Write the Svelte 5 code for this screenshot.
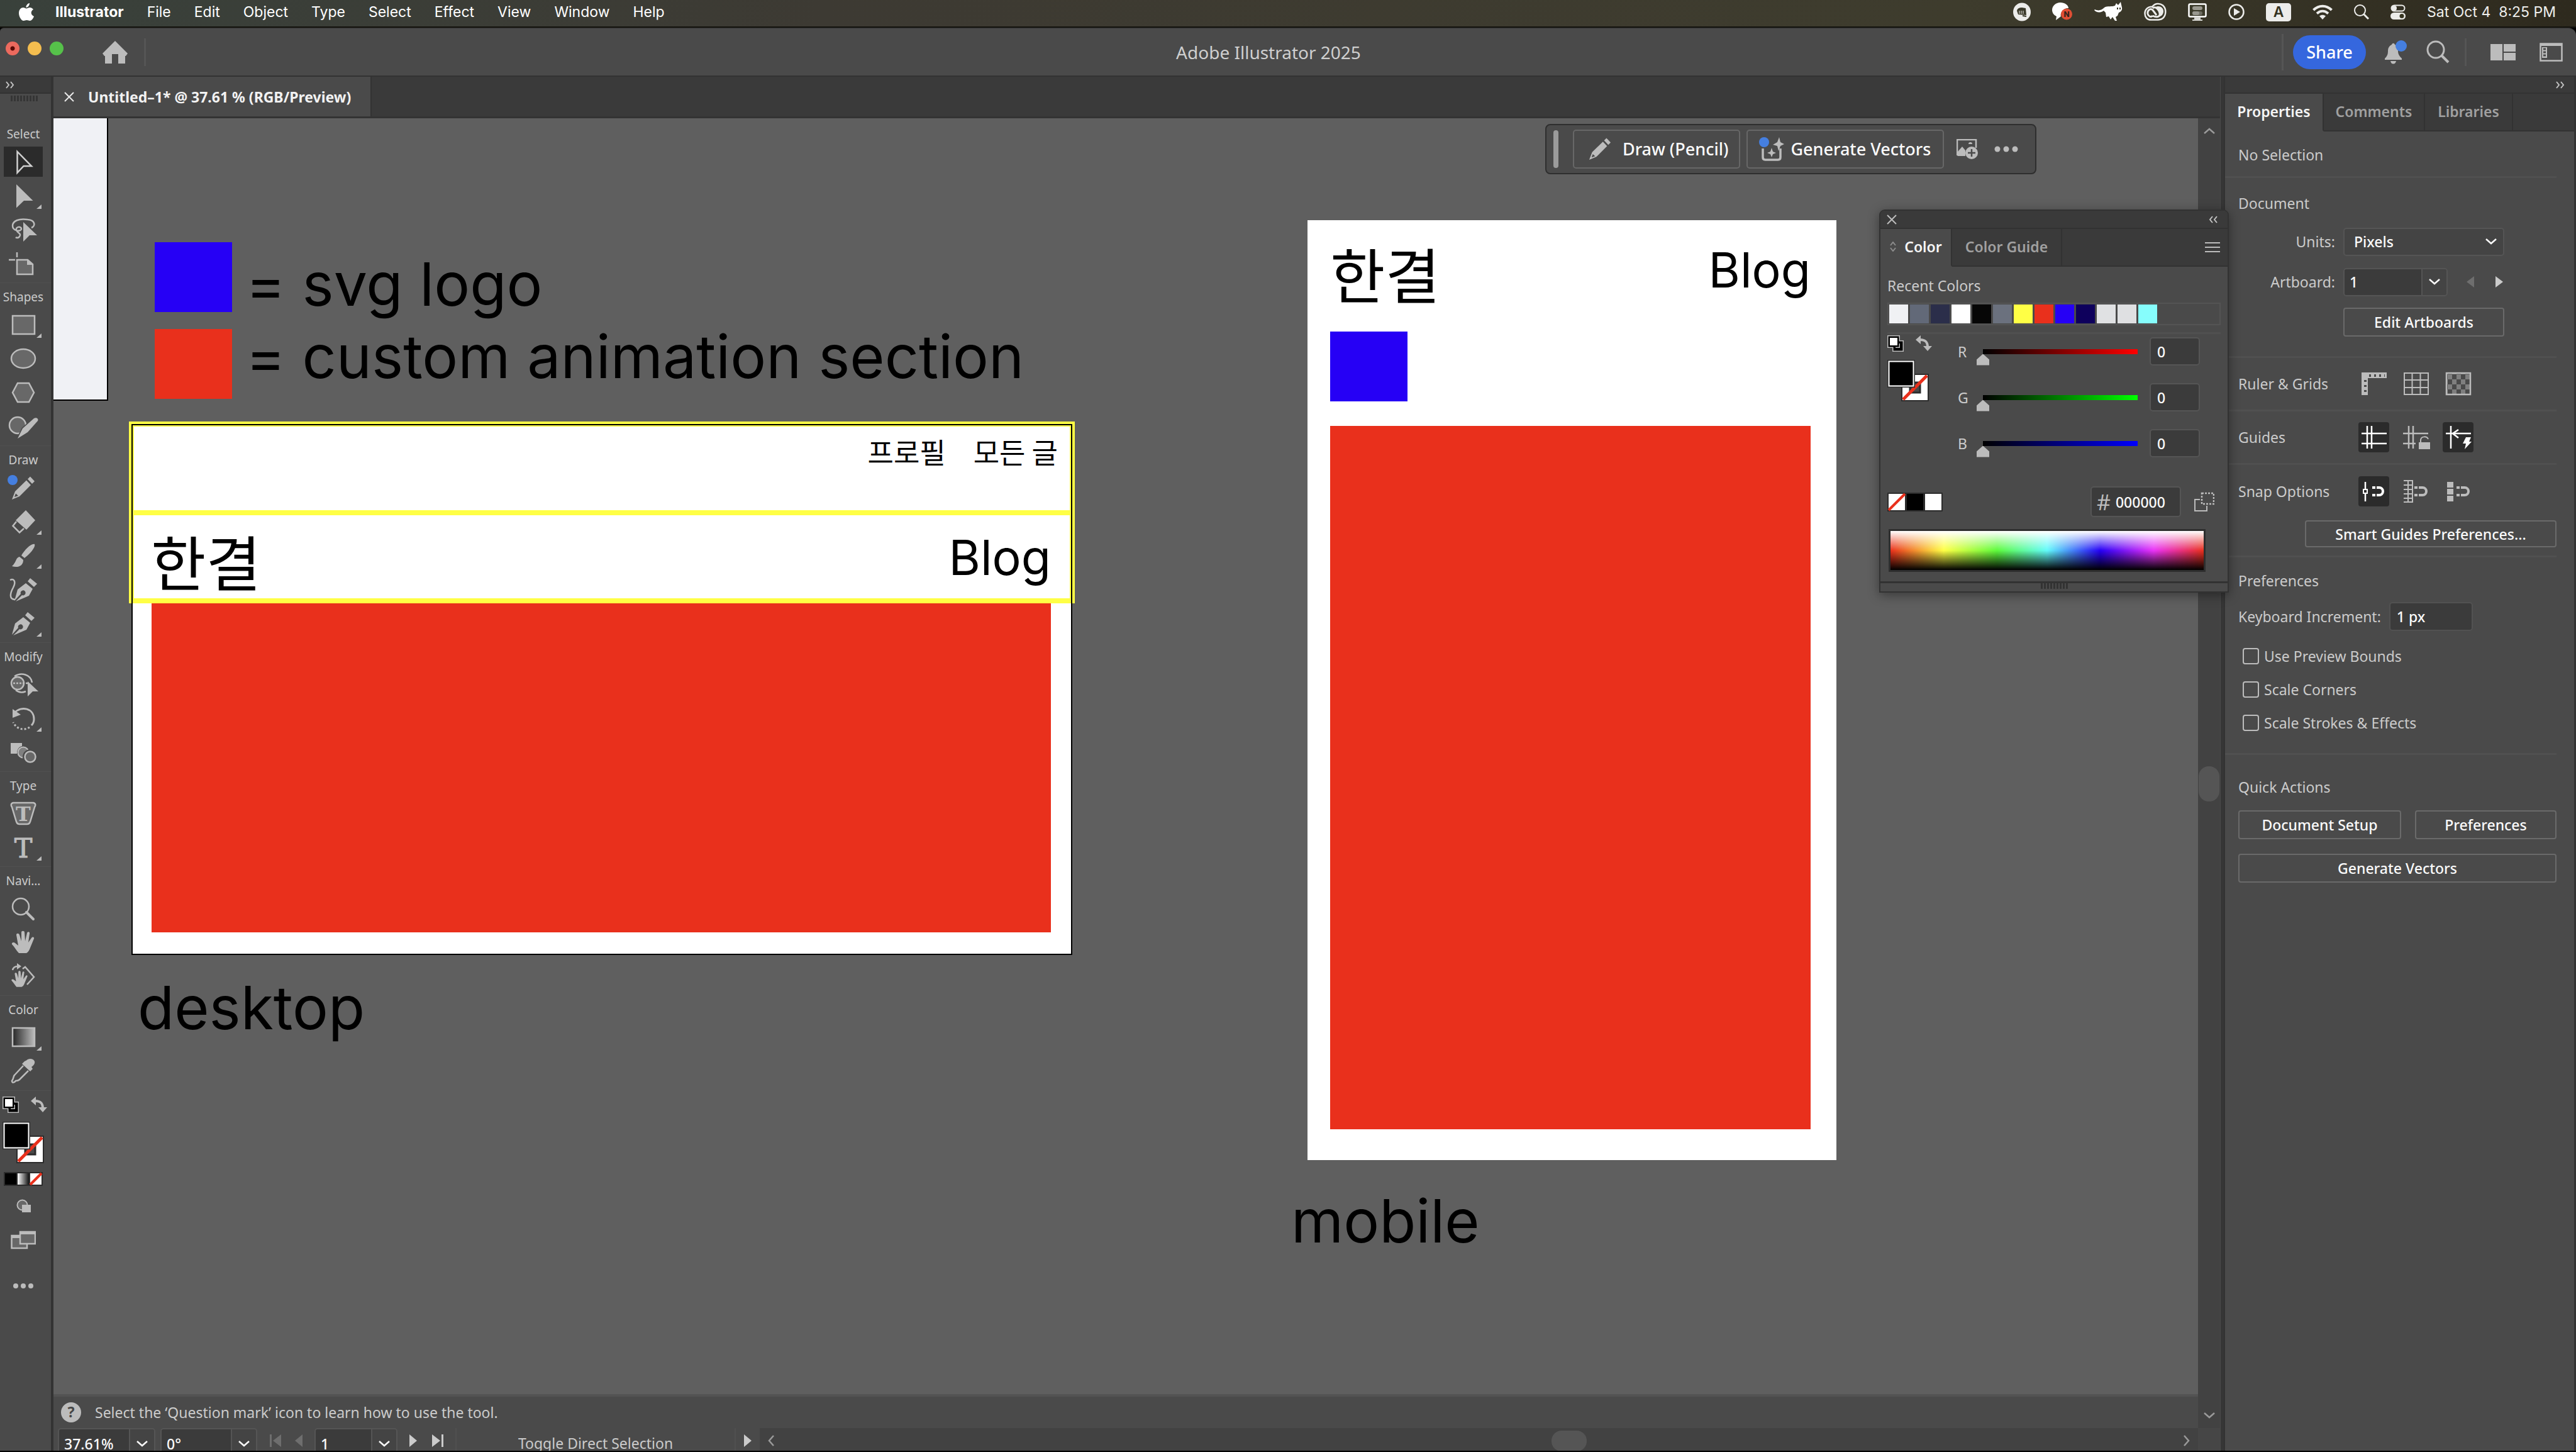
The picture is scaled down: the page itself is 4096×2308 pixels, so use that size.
<script>
  const menus = ['File', 'Edit', 'Object', 'Type', 'Select', 'Effect', 'View', 'Window', 'Help'];

  const G = '#bcbcbc';
  const D = '#686868';
  const corner = `<path d="M60 41V48H52Z" fill="${G}"/>`;
  const nib = `<path fill-rule="evenodd" fill="${G}" d="M13 45L18 27L31 17L42 26L36 37L15 46L25 36A4 4 0 1 0 23 34Z"/><path fill="${G}" d="M34 14L38 9L49 18L44 23Z"/>`;
  const hand = `<path fill="${G}" d="M24 44C20 40 17 34 13 30C12 27 16 26 18 28L23 32L20 15C20 12 24 12 25 15L28 25L28 11C28 8 33 8 33 11L34 25L37 12C38 9 42 10 41 13L39 27L44 20C46 17 49 19 48 21L41 38C39 42 37 44 35 44Z"/>`;
  const paths = {
    select: `<path d="M21.500 11L44 34H31.500L21.500 44.500Z" fill="none" stroke="#d0d0d0" stroke-width="2.500"/>`,
    direct: `<path d="M20 9L46.500 35H32L20 46.500Z" fill="${G}"/>${corner}`,
    lasso: `<g fill="none" stroke="${G}" stroke-width="2.500"><path d="M44 24C51 21 50 12 38 11C24 9 14 13 14 21C14 29 27 31 28 26C28 21 18 22 20 28C21 32 29 33 25 38C23 41 20 40 19 39"/></g><path d="M31 15L53 36H41L31 46Z" fill="${G}"/>`,
    artboard: `<path d="M21 21H38L46 28V44H21Z" fill="${D}" stroke="${G}" stroke-width="2.500"/><path d="M37 20V29H47Z" fill="${G}"/><path d="M21 9V17M8 21H18" stroke="${G}" stroke-width="2.500"/>`,
    rect: `<rect x="14" y="13" width="35" height="29" fill="${D}" stroke="${G}" stroke-width="2.500"/>${corner}`,
    ellipse: `<ellipse cx="31" cy="27" rx="19" ry="15" fill="${D}" stroke="${G}" stroke-width="2.500"/>`,
    polygon: `<path d="M14 27L22 12H40L48 27L40 42H22Z" fill="${D}" stroke="${G}" stroke-width="2.500"/>`,
    shaper: `<circle cx="22" cy="25" r="13" fill="${D}" stroke="${G}" stroke-width="2.500"/><path d="M22 46L30 30L48 14C51 12 56 14 54 18L38 36Z" fill="${G}" stroke="#4a4a4a" stroke-width="3" paint-order="stroke"/>`,
    pencil: `<path fill-rule="evenodd" fill="${G}" d="M13 46L18 33L36 15.500L43 23L25 41ZM19 36.500L17 42L23 40Z"/><path fill="${G}" d="M38 13.500L42 9.500L49 17L45 21Z"/><circle cx="14" cy="15" r="8" fill="#457fe0"/>`,
    eraser: `<path fill="${G}" d="M35 9L50 25L36 40L19 25Z"/><path d="M20 27L14.500 34L25 44.500L32 38" fill="none" stroke="${G}" stroke-width="2.500"/>${corner}`,
    brush: `<path fill="${G}" d="M49 9C44 7 33 18 28 27L33 31C41 25 51 14 49 9ZM25 29C19 30 20 38 13 44C22 47 31 44 31 34Z"/>${corner}`,
    curve: `<path d="M10 12C16 9 20 14 15 24C10 33 8 43 18 43" fill="none" stroke="${G}" stroke-width="2.500"/><g transform="translate(4 0)">${nib}</g>`,
    pen: nib + corner,
    builder: `<g fill="none" stroke="${G}" stroke-width="2.500"><path d="M17 14C28 7 43 11 45 24M19 36C24 40 30 40 35 38"/><circle cx="22" cy="25" r="10" fill="${D}"/><path d="M15 25H38" stroke-dasharray="3 2"/></g><path d="M38 22L55 38H46L38 46Z" fill="${G}"/>`,
    rotate: `<path d="M17 18C28 6 48 11 48 28C48 32 47 35 44 38" fill="none" stroke="${G}" stroke-width="3"/><path d="M14 12V26L27 21Z" fill="${G}"/><path d="M41 41C32 47 20 44 15 33" fill="none" stroke="${G}" stroke-width="3" stroke-dasharray="3 3"/>${corner}`,
    blend: `<path d="M11 12H29V17C24 18 21 22 21 29H11Z" fill="${G}"/><circle cx="31" cy="27" r="8.500" fill="#808080" stroke="${G}" stroke-width="2"/><circle cx="42" cy="34" r="12" fill="#4a4a4a"/><circle cx="42" cy="34" r="8.500" fill="${D}" stroke="${G}" stroke-width="2.500"/>`,
    touch: `<path d="M15 10H47C51 11 51 14 49 17L42 40C41 43 39 44 37 44H25C23 44 21 43 20 40L13 17C11 14 11 11 15 10Z" fill="${D}" stroke="${G}" stroke-width="2.500"/><text x="31" y="39" text-anchor="middle" font-family="DejaVu Serif, serif" font-weight="bold" font-size="32" fill="${G}">T</text>`,
    type: `<text x="31" y="43" text-anchor="middle" font-family="DejaVu Serif, serif" font-size="43" fill="${G}" stroke="${G}">T</text>${corner}`,
    zoom: `<circle cx="27" cy="24" r="13" fill="none" stroke="${G}" stroke-width="2.500"/><path d="M36 33L47 44" stroke="${G}" stroke-width="4" stroke-linecap="round"/>`,
    hand,
    rotview: `<g transform="translate(3 12) scale(.72)">${hand}</g><path d="M14 17C15 13 18 11 22 11" fill="none" stroke="${G}" stroke-width="2.500"/><path d="M21 6L28 11L21 16Z" fill="${G}"/><path d="M30 15L34 12L48 28L37 40" fill="none" stroke="${G}" stroke-width="2.500"/>`,
    gradient: `<defs><linearGradient id="tg"><stop offset="0" stop-color="#262626"/><stop offset="1" stop-color="#bdbdbd"/></linearGradient></defs><rect x="14" y="12" width="35" height="29" fill="url(#tg)" stroke="${G}" stroke-width="2.500"/>${corner}`,
    dropper: `<path d="M36 9.500C39 6 47 6 49 11C50 15 47 18 44 20L46 23L42 27L29 15L33 11Z" fill="${G}"/><path d="M31 18L17 33C15 35 16 38 13 42C13 46 17 45 19 42C22 42 23 42 25 40L39 26" fill="none" stroke="${G}" stroke-width="2.500"/>`
  };

  const sections = [
    { name: 'Select', tools: [['select', 'Selection'], ['direct', 'Direct Selection'], ['lasso', 'Lasso'], ['artboard', 'Artboard']] },
    { name: 'Shapes', tools: [['rect', 'Rectangle'], ['ellipse', 'Ellipse'], ['polygon', 'Polygon'], ['shaper', 'Shaper']] },
    { name: 'Draw', tools: [['pencil', 'Pencil'], ['eraser', 'Eraser'], ['brush', 'Paintbrush'], ['curve', 'Curvature'], ['pen', 'Pen']] },
    { name: 'Modify', tools: [['builder', 'Shape Builder'], ['rotate', 'Rotate'], ['blend', 'Blend']] },
    { name: 'Type', tools: [['touch', 'Touch Type'], ['type', 'Type']] },
    { name: 'Navi...', tools: [['zoom', 'Zoom'], ['hand', 'Hand'], ['rotview', 'Rotate View']] },
    { name: 'Color', tools: [['gradient', 'Gradient'], ['dropper', 'Eyedropper']] }
  ];
  let active = $state('select');

  const recent = ['#f0f1f4', '#626978', '#2b2e4a', '#ffffff', '#060606', '#6b717e', '#ffff45', '#e9301c', '#2600f5', '#0e005c', '#e0e1e3', '#dfe0e2', '#86fdfc'];
  let channels = $state([
    { name: 'R', value: 0 },
    { name: 'G', value: 0 },
    { name: 'B', value: 0 }
  ]);
  const prefs = ['Use Preview Bounds', 'Scale Corners', 'Scale Strokes & Effects'];
</script>

{#snippet chev()}
  <svg class="chev" viewBox="0 0 20 12" aria-hidden="true"><path d="M2 2L10 9L18 2" fill="none" stroke="currentColor" stroke-width="2.500" /></svg>
{/snippet}

{#snippet expand()}
  <svg width="14" height="12" viewBox="0 0 14 12" aria-hidden="true"><path d="M1 1L5 6L1 11M8 1L12 6L8 11" fill="none" stroke="#c2c2c2" stroke-width="2" /></svg>
{/snippet}

{#snippet swapRow()}
  <svg width="26" height="26" viewBox="0 0 26 26" aria-hidden="true">
    <rect x="8" y="8" width="18" height="18" fill={G} /><rect width="20" height="20" fill={G} />
    <rect x="9.500" y="9.500" width="15" height="15" fill="#000" /><rect x="13" y="13" width="7" height="7" fill={G} /><rect x="1.500" y="1.500" width="17" height="17" fill="#000" />
    <rect x="4" y="4" width="12" height="12" fill="#fff" />
  </svg>
  <svg width="26" height="26" viewBox="0 0 26 26" aria-hidden="true">
    <path d="M7 7C15 7 19 10 19 19" fill="none" stroke={G} stroke-width="4" /><path d="M0 7L8 0V14ZM12 17H26L19 25Z" fill={G} />
  </svg>
{/snippet}

{#snippet fillStroke()}
  <svg width="66" height="66" viewBox="0 0 66 66" aria-hidden="true">
    <rect x="23" y="23" width="42" height="42" fill="#fff" stroke="#2c2c2c" stroke-width="2" />
    <rect x="36" y="36" width="16" height="16" fill="#4a4a4a" stroke="#2c2c2c" stroke-width="3" />
    <path d="M25 63L63 25" stroke="#e9301c" stroke-width="5" />
    <rect width="44" height="44" fill="#2c2c2c" /><rect x="1.500" y="1.500" width="41" height="41" fill="#fff" /><rect x="3.500" y="3.500" width="37" height="37" fill="#000" />
  </svg>
{/snippet}

<div class="screen">
  <nav class="menubar" aria-label="Menu bar">
    <svg width="24" height="28" viewBox="0 0 24 28" aria-label="Apple"><path fill="#fff" d="M17 0C17 4 14 7 11.500 7C11 3.500 14 .5 17 0ZM12 8.500C13.500 8.500 15 7 17.500 7C20 7 22 8.500 23 10C18 13 19 19 24 21C22.500 25 20 28 17.500 28C15.500 28 15 27 12.500 27C10 27 9.500 28 7.500 28C4 28 0 21.500 0 16C0 10 3.500 7 7 7C9 7 10.500 8.500 12 8.500Z" /></svg>
    <button class="mi strong">Illustrator</button>
    {#each menus as m}<button class="mi">{m}</button>{/each}
    <div class="tray">
      <svg width="28" height="30" viewBox="0 0 28 30"><ellipse cx="14" cy="15" rx="14" ry="14.500" fill="#ececea" /><path d="M6 13Q7 8 14 8L20 9L21 20L8 19Z" fill="#3a3929" /><path d="M10 13V18M13 13V18M16 13V18" stroke="#ececea" /><path d="M15 21L21 22" stroke="#3a3929" stroke-width="2" /></svg>
      <svg width="32" height="30" viewBox="0 0 32 30"><path d="M13 0C20 0 26 4 26 9C19 8 12 16 14 22L6 28L7 22C2 20 0 15 0 12C0 5 6 0 13 0Z" fill="#fff" /><circle cx="23" cy="18.500" r="9" fill="#e04e34" /><text x="23" y="23" text-anchor="middle" font-family="Inter" font-weight="800" font-size="12" fill="#33241c">N</text></svg>
      <svg width="46" height="32" viewBox="0 0 46 32"><path d="M2 12C8 15 13 13 17 9C21 6 30 8 34 6L36 2L39 5L43 0L45 9C46 13 43 16 40 17L38 22L35 24L37 30H34L30 24L27 28L24 23L20 24L19 17L16 14C10 18 4 17 1 13Z" fill="#fff" /><path d="M38 9V12M42 9V12" stroke="#3a3929" stroke-width="2" /></svg>
      <svg width="36" height="30" viewBox="0 0 36 30"><g fill="none" stroke="#ececea"><path d="M11 27.500C5 27.500 1.500 23 1.500 17.500C1.500 10 8 6 13 7C17 1 25 .5 30 4.500C36 10 35.500 20 30 25C27 27.500 24 27.500 11 27.500Z" stroke-width="2.500" /><path d="M20 20L14 12C10 8 5 13 6 18C7 22 11 24 14 21M14 9C19 5 26 13 25 20C24 23 19 24 14 21" stroke-width="3" /></g><path d="M17 8C24 3 32 8 31 15C30 21 26 23 22 22C27 18 23 10 17 8Z" fill="#ececea" /></svg>
      <svg width="30" height="30" viewBox="0 0 30 30"><rect x="1.500" y="2.500" width="27" height="20" rx="2" fill="#3a3929" stroke="#fff" stroke-width="2.500" /><rect x="7" y="6" width="16" height="6" rx="3" fill="#99988f" /><rect x="7" y="14" width="16" height="6" rx="3" fill="#6e6d62" /><rect x="7" y="14" width="11" height="6" rx="3" fill="#99988f" /><path d="M10 24H20V27H23V29H7V27H10Z" fill="#d5d5d0" /></svg>
      <svg width="26" height="26" viewBox="0 0 26 26"><circle cx="13" cy="13" r="11.500" fill="none" stroke="#ececea" stroke-width="2.500" /><path d="M9 7L19 13L9 19Z" fill="#ececea" /></svg>
      <span class="ime">A</span>
      <svg width="32" height="24" viewBox="0 0 32 24"><g fill="none" stroke="#ececea" stroke-width="4"><path d="M1.500 9C10 .5 22 .5 30.500 9" /><path d="M7 14.500C12.500 9.500 19.500 9.500 25 14.500" /></g><path d="M11 18.500C14 16 18 16 21 18.500L16 24Z" fill="#ececea" /></svg>
      <svg width="24" height="24" viewBox="0 0 24 24"><circle cx="9.500" cy="9.500" r="8.500" fill="none" stroke="#ececea" stroke-width="2" /><path d="M15.500 15.500L23 23" stroke="#ececea" stroke-width="3" /></svg>
      <svg width="24" height="24" viewBox="0 0 24 24"><rect x="1.500" y="1.500" width="21" height="9" rx="4.500" fill="none" stroke="#ececea" stroke-width="2" /><circle cx="6" cy="6" r="4" fill="#ececea" /><rect y="13" width="24" height="11" rx="5.500" fill="#ececea" /><circle cx="18" cy="18.500" r="3.500" fill="#35331f" /></svg>
      <span class="clock">Sat Oct 4 &nbsp;8:25 PM</span>
    </div>
  </nav>

  <div class="window">
    <header class="appbar">
      <div class="left">
        <span class="lights"><i class="r"></i><i class="y"></i><i class="g"></i></span>
        <button class="bare" aria-label="Home"><svg width="40" height="36" viewBox="0 0 40 36"><path fill={G} d="M20 0L40 20L37 24H36V36H25V21H15V36H4V24H3L0 20Z" /></svg></button>
        <span class="vline"></span>
      </div>
      <h1>Adobe Illustrator 2025</h1>
      <div class="right">
        <span class="vline tall"></span>
        <button class="share">Share</button>
        <button class="bare" aria-label="Notifications"><svg width="36" height="38" viewBox="0 0 36 38"><path fill={G} d="M11 7C12 4 15 4 16 7C20 9 21 12 21 17C21 22 23 25 27 29V31H0V29C4 25 5 22 5 17C5 12 7 9 11 7ZM9 33H18C17 37 15 37.500 13.500 37.500C12 37.500 10 37 9 33Z" /><circle cx="26" cy="9" r="9" fill="#457fe0" /></svg></button>
        <button class="bare" aria-label="Search"><svg width="37" height="37" viewBox="0 0 37 37"><circle cx="15" cy="15" r="13" fill="none" stroke={G} stroke-width="3" /><path d="M24 24L35 35" stroke={G} stroke-width="4" /></svg></button>
        <span class="vline"></span>
        <button class="bare wide" aria-label="Arrange documents"><svg width="40" height="26" viewBox="0 0 40 26"><path fill={G} d="M0 0H19V26H0ZM21 0H40V12H21ZM21 14H40V26H21Z" /></svg></button>
        <button class="bare" aria-label="Workspace"><svg width="37" height="30" viewBox="0 0 37 30"><path d="M1.500 1.500H35.500V28.500H1.500Z" fill="none" stroke={G} stroke-width="2.500" /><path d="M1 1H36V5H1ZM4 7H12V24H4Z" fill={G} /><path d="M6 10H10M6 15H10M6 20H10" stroke="#4a4a4a" stroke-width="3" /></svg></button>
      </div>
    </header>

    <div class="work">
      <aside class="toolbar" aria-label="Tools">
        <div class="strip">{@render expand()}</div>
        <div class="grip"></div>
        {#each sections as s}
          <section>
            <h2>{s.name}</h2>
            {#each s.tools as [id, label]}
              <button class="tool" class:on={active === id} aria-label={label} onclick={() => (active = id)}>
                <svg width="62" height="54" viewBox="0 0 62 54">{@html paths[id]}</svg>
              </button>
            {/each}
          </section>
        {/each}
        <section class="inks">
          <div class="swap">{@render swapRow()}</div>
          <div class="fs">{@render fillStroke()}</div>
          <svg width="62" height="22" viewBox="0 0 62 22" aria-hidden="true">
            <defs><linearGradient id="mg"><stop offset="0" stop-color="#fff" /><stop offset="1" stop-color="#111" /></linearGradient></defs>
            <rect width="62" height="22" fill="#2c2c2c" /><rect x="2" y="2" width="18" height="18" /><rect x="22" y="2" width="18" height="18" fill="url(#mg)" /><rect x="42" y="2" width="18" height="18" fill="#fff" /><path d="M42 20L60 2" stroke="#e9301c" stroke-width="4" />
          </svg>
          <button class="bare m1" aria-label="Drawing mode"><svg width="24" height="22" viewBox="0 0 24 22"><circle cx="9.500" cy="9.500" r="8" fill={D} stroke={G} stroke-width="2" /><rect x="9" y="9" width="14" height="12" fill={G} /></svg></button>
          <button class="bare m2" aria-label="Screen mode"><svg width="40" height="30" viewBox="0 0 40 30"><path d="M1.500 8H26V28H1.500Z" fill={D} stroke={G} stroke-width="2.500" /><path d="M1 7H26V12H1Z" fill={G} /><path d="M15 2H39V21H15Z" fill={D} stroke={G} stroke-width="2.500" /><path d="M14 1H40V6H14Z" fill={G} /></svg></button>
          <button class="bare m3" aria-label="Edit toolbar"><svg width="32" height="8" viewBox="0 0 32 8"><circle cx="4" cy="4" r="4" fill={G} /><circle cx="16" cy="4" r="4" fill={G} /><circle cx="28" cy="4" r="4" fill={G} /></svg></button>
        </section>
      </aside>

      <main>
        <div class="tabs">
          <div class="doctab">
            <button class="bare" aria-label="Close document"><svg width="16" height="16" viewBox="0 0 16 16"><path d="M1 1L15 15M15 1L1 15" stroke="#e8e8e8" stroke-width="2" /></svg></button>
            <span>Untitled–1* @ 37.61 % (RGB/Preview)</span>
          </div>
        </div>
        <div class="stage">
          <div class="canvas">
            <div class="page"></div>
            <div class="chip blue key1"></div>
            <p class="note n1">= svg logo</p>
            <div class="chip red key2"></div>
            <p class="note n2">= custom animation section</p>

            <article class="board desktop">
              <div class="frame navrow"><span>프로필</span><span>모든 글</span></div>
              <div class="frame herorow"><b>한결</b><em>Blog</em></div>
              <div class="red fillbox"></div>
            </article>
            <p class="note n3">desktop</p>

            <article class="board mobile">
              <div class="herorow"><b>한결</b><em>Blog</em></div>
              <div class="chip blue"></div>
              <div class="red fillbox"></div>
            </article>
            <p class="note n4">mobile</p>

            <div class="taskbar">
              <span class="handle"></span>
              <button class="box"><svg width="36" height="36" viewBox="12 9 38 38"><path fill-rule="evenodd" fill={G} d="M13 46L18 33L36 15.500L43 23L25 41ZM19 36.500L17 42L23 40Z" /><path fill={G} d="M38 13.500L42 9.500L49 17L45 21Z" /></svg>Draw (Pencil)</button>
              <button class="box gen"><svg width="40" height="38" viewBox="0 0 40 38"><path d="M6 18V32Q6 36 10 36H30Q34 36 34 32V18" fill="none" stroke={G} stroke-width="3.500" /><path fill={G} d="M32 0L34 8L40 11L34 14L31 22L29 14L22 12L29 8ZM20 17L22 23L27 25L22 27L20 32L18 27L13 25L18 23Z" /><circle cx="8" cy="8" r="8" fill="#457fe0" /></svg>Generate Vectors</button>
              <button class="bare" aria-label="Add image"><svg width="34" height="32" viewBox="0 0 34 32"><path d="M1 26V1H31V14" fill="none" stroke={G} stroke-width="2.500" /><path d="M2 26V20L9 12L14 18V27H1ZM19 8A3 3 0 1 1 25 8Z" fill={G} /><circle cx="24" cy="22" r="10" fill={G} /><path d="M24 16V28M18 22H30" stroke="#4a4a4a" stroke-width="2.500" /></svg></button>
              <button class="bare" aria-label="More options"><svg width="38" height="10" viewBox="0 0 38 10"><circle cx="5" cy="5" r="4.500" fill={G} /><circle cx="19" cy="5" r="4.500" fill={G} /><circle cx="33" cy="5" r="4.500" fill={G} /></svg></button>
            </div>
          </div>
          <div class="vscroll">
            <button class="bare up" aria-label="Scroll up">{@render chev()}</button>
            <span class="vthumb"></span>
            <button class="bare" aria-label="Scroll down">{@render chev()}</button>
          </div>
          <div class="hint">
            <svg width="32" height="32" viewBox="0 0 32 32" aria-hidden="true"><circle cx="16" cy="16" r="16" fill={G} /><text x="16" y="24" text-anchor="middle" font-family="Noto Sans" font-weight="bold" font-size="23" fill="#454545">?</text></svg>
            <span>Select the ‘Question mark’ icon to learn how to use the tool.</span>
          </div>
        </div>
        <footer class="status">
          <div class="combo zoomf"><input aria-label="Zoom level" value="37.61%" /><button aria-label="Zoom presets">{@render chev()}</button></div>
          <div class="combo rotf"><input aria-label="Canvas rotation" value="0°" /><button aria-label="Rotation presets">{@render chev()}</button></div>
          <span class="pair">
            <button class="bare dim" aria-label="First artboard"><svg width="20" height="20" viewBox="0 0 20 20"><path d="M1 0H4V20H1ZM19 0V20L6 10Z" fill="currentColor" /></svg></button>
            <button class="bare dim" aria-label="Previous artboard"><svg width="14" height="20" viewBox="0 0 14 20"><path d="M13 0V20L1 10Z" fill="currentColor" /></svg></button>
          </span>
          <div class="combo artf"><input aria-label="Artboard number" value="1" /><button aria-label="Artboard list">{@render chev()}</button></div>
          <span class="pair">
            <button class="bare" aria-label="Next artboard"><svg width="14" height="20" viewBox="0 0 14 20"><path d="M1 0V20L13 10Z" fill="currentColor" /></svg></button>
            <button class="bare" aria-label="Last artboard"><svg width="20" height="20" viewBox="0 0 20 20"><path d="M16 0H19V20H16ZM1 0V20L14 10Z" fill="currentColor" /></svg></button>
          </span>
          <div class="mode">Toggle Direct Selection</div>
          <button class="bare play" aria-label="Status options"><svg width="14" height="20" viewBox="0 0 14 20"><path d="M1 0V20L13 10Z" fill="currentColor" /></svg></button>
          <div class="hscroll">
            <button class="bare lt" aria-label="Scroll left">{@render chev()}</button>
            <span class="hthumb"></span>
            <button class="bare rt" aria-label="Scroll right">{@render chev()}</button>
          </div>
          <div class="cornerbox"></div>
        </footer>
      </main>

      <aside class="props">
        <div class="strip end">{@render expand()}</div>
        <div class="ptabs" role="tablist">
          <button role="tab" class="on" aria-selected="true">Properties</button>
          <button role="tab" aria-selected="false">Comments</button>
          <button role="tab" aria-selected="false">Libraries</button>
        </div>
        <section class="none"><h3>No Selection</h3></section>
        <section class="docsec">
          <h3>Document</h3>
          <div class="frow"><label for="units">Units:</label>
            <div class="selwrap"><select id="units"><option>Pixels</option></select>{@render chev()}</div>
          </div>
          <div class="frow"><label for="ab">Artboard:</label>
            <div class="combo abf"><input id="ab" value="1" /><button aria-label="Choose artboard">{@render chev()}</button></div>
            <button class="bare dim nav1" aria-label="Previous"><svg width="14" height="18" viewBox="0 0 14 18"><path d="M13 0V18L1 9Z" fill="currentColor" /></svg></button>
            <button class="bare nav2" aria-label="Next"><svg width="14" height="18" viewBox="0 0 14 18"><path d="M1 0V18L13 9Z" fill="currentColor" /></svg></button>
          </div>
          <div class="frow"><span></span><button class="btn edit">Edit Artboards</button></div>
        </section>
        <section class="irow">
          <h3>Ruler &amp; Grids</h3>
          <button class="ib" aria-label="Show rulers"><svg width="42" height="38" viewBox="0 0 42 38"><path d="M1 1H41V10H11V37H1Z" fill={G} /><path d="M13 6H38" stroke="#4a4a4a" stroke-width="4" stroke-dasharray="3 5" /><path d="M7 13V35" stroke="#4a4a4a" stroke-width="4" stroke-dasharray="3 5" /></svg></button>
          <button class="ib" aria-label="Show grid"><svg width="42" height="38" viewBox="0 0 42 38"><path d="M2 2H40V36H2ZM14.500 2V36M27.500 2V36M2 13H40M2 25H40" fill="none" stroke={G} stroke-width="2" /></svg></button>
          <button class="ib" aria-label="Show transparency grid"><svg width="42" height="38" viewBox="0 0 42 38"><defs><pattern id="ck" x="4" y="4" width="14" height="16" patternUnits="userSpaceOnUse"><path d="M0 0H7V8H0ZM7 8H14V16H7Z" fill="#7f7f7f" /></pattern></defs><rect x="2" y="2" width="38" height="34" fill="url(#ck)" stroke={G} stroke-width="2.500" /></svg></button>
        </section>
        <section class="irow">
          <h3>Guides</h3>
          <button class="ib on" aria-label="Show guides"><svg width="42" height="38" viewBox="0 0 42 38"><path d="M10 1V37M17 1V37M1 13H41M1 29H41" stroke="#fff" stroke-width="2.500" /></svg></button>
          <button class="ib" aria-label="Lock guides"><svg width="44" height="38" viewBox="0 0 44 38"><path d="M10 1V37M17 1V37M1 13H41M1 29H21" stroke={G} stroke-width="2.500" /><rect x="26" y="27" width="18" height="11" fill={G} /><path d="M29 27V23C30 17 39 17 41 22" fill="none" stroke={G} stroke-width="2" /></svg></button>
          <button class="ib on" aria-label="Smart guides"><svg width="42" height="38" viewBox="0 0 42 38"><path d="M9 1V37M1 13H41M21 7L12 13L21 20" fill="none" stroke="#fff" stroke-width="2.500" /><path d="M33 19H41L38 26H42L31 38L33 29H28Z" fill="#fff" /></svg></button>
        </section>
        <section class="snap">
          <div class="irow">
            <h3>Snap Options</h3>
            <button class="ib on" aria-label="Snap to point"><svg width="42" height="38" viewBox="0 0 42 38"><path d="M7 4V35" stroke="#fff" stroke-width="2.500" /><rect x="4" y="16" width="6" height="6" fill="#2b2b2b" stroke="#fff" stroke-width="2" /><path d="M25 13H29A6 6 0 0 1 29 25H25" fill="none" stroke="#fff" stroke-width="4" /><path d="M18 13H23M18 25H23" stroke="#fff" stroke-width="4" /></svg></button>
            <button class="ib" aria-label="Snap to grid"><svg width="42" height="38" viewBox="0 0 42 38"><path d="M1 2H15V36H1M8 2V36M1 9H15M1 16H15M1 23H15M1 30H15" fill="none" stroke={G} stroke-width="2" /><path d="M25 13H31A6 6 0 0 1 31 25H25" fill="none" stroke={G} stroke-width="4" /><path d="M18 13H23M18 25H23" stroke={G} stroke-width="4" /></svg></button>
            <button class="ib" aria-label="Snap to pixel"><svg width="42" height="38" viewBox="0 0 42 38"><path d="M3 4H13V13H3ZM3 15H13V24H3ZM3 26H13V35H3Z" fill={G} /><path d="M25 13H31A6 6 0 0 1 31 25H25" fill="none" stroke={G} stroke-width="4" /><path d="M18 13H23M18 25H23" stroke={G} stroke-width="4" /></svg></button>
          </div>
          <button class="btn smart">Smart Guides Preferences...</button>
        </section>
        <section class="prefs">
          <h3>Preferences</h3>
          <div class="kb"><label for="ki">Keyboard Increment:</label><input id="ki" value="1 px" /></div>
          {#each prefs as p}<label class="check"><input type="checkbox" />{p}</label>{/each}
        </section>
        <section class="quick">
          <h3>Quick Actions</h3>
          <div class="qgrid">
            <button class="btn">Document Setup</button>
            <button class="btn">Preferences</button>
            <button class="btn span">Generate Vectors</button>
          </div>
        </section>
      </aside>
    </div>

    <div class="colorpanel" role="dialog" aria-label="Color">
      <div class="cphead">
        <button class="bare" aria-label="Close panel"><svg width="16" height="16" viewBox="0 0 16 16"><path d="M1 1L15 15M15 1L1 15" stroke={G} stroke-width="2" /></svg></button>
        <svg width="14" height="12" viewBox="0 0 14 12" aria-hidden="true"><path d="M6 1L2 6L6 11M13 1L9 6L13 11" fill="none" stroke="#c2c2c2" stroke-width="2" /></svg>
      </div>
      <div class="cptabs" role="tablist">
        <button role="tab" class="on" aria-selected="true"><svg width="12" height="16" viewBox="0 0 12 16"><path d="M2 6L6 1L10 6M2 10L6 15L10 10" fill="none" stroke="#8c8c8c" stroke-width="2" /></svg>Color</button>
        <button role="tab" aria-selected="false">Color Guide</button>
        <button class="bare burger" aria-label="Panel menu"><svg width="24" height="18" viewBox="0 0 24 18"><path d="M0 2H24M0 9H24M0 16H24" stroke={G} stroke-width="2" /></svg></button>
      </div>
      <div class="cpbody">
        <h3>Recent Colors</h3>
        <div class="swatches">
          {#each recent as c}<button style:background={c} aria-label={c}></button>{/each}
        </div>
        <div class="mixer">
          <div class="inkcol">
            <div class="swap">{@render swapRow()}</div>
            {@render fillStroke()}
          </div>
          <div class="sliders">
            {#each channels as ch}
              <label for={'r' + ch.name}>{ch.name}</label>
              <input id={'r' + ch.name} class={'range ' + ch.name} type="range" min="0" max="255" bind:value={ch.value} />
              <input class="num" aria-label={ch.name + ' value'} bind:value={ch.value} />
            {/each}
          </div>
        </div>
        <div class="hexrow">
          <svg width="88" height="30" viewBox="0 0 88 30" aria-hidden="true"><rect width="88" height="30" fill="#2c2c2c" /><rect x="2" y="2" width="26" height="26" fill="#fff" /><path d="M2 28L28 2" stroke="#e9301c" stroke-width="4" /><rect x="31" y="2" width="26" height="26" fill="#000" /><rect x="60" y="2" width="26" height="26" fill="#fff" /></svg>
          <label class="hex"><span>#</span><input value="000000" aria-label="Hex value" /></label>
          <svg width="32" height="32" viewBox="0 0 32 32" aria-hidden="true"><path d="M9 12H1V30H20V22" fill="none" stroke={G} stroke-width="2" /><path d="M12 2H31V19H12Z" fill="none" stroke={G} stroke-width="2.500" stroke-dasharray="3 2" /></svg>
        </div>
        <div class="spectrum"></div>
      </div>
      <div class="cpfoot"><i></i></div>
    </div>
  </div>
</div>

<style>
  :global(body) { background: #000; }
  * { box-sizing: border-box; }
  h1, h2, h3, p { margin: 0; font-weight: 400; }
  h3 { font-size: 23px; }
  button, input, select { font: inherit; color: inherit; margin: 0; border-radius: 0; min-width: 0; }
  button { background: none; border: 0; padding: 0; }
  svg { display: block; flex: none; }
  .screen { height: 100vh; display: flex; flex-direction: column; overflow: hidden; font: 23px/28px 'Noto Sans', sans-serif; color: #cbcbcb; }
  .bare { display: flex; align-items: center; justify-content: center; }
  .dim { color: #6e6e6e; }
  .chev { width: 20px; height: 12px; }

  .menubar { flex: none; height: 44px; display: flex; align-items: center; gap: 37px; padding: 0 32px 4px 30px; background: linear-gradient(90deg, #39413b, #3d3a33 32%, #3e3c2d 76%, #2e2a1e); border-bottom: 2px solid #15140f; font-family: Inter, sans-serif; color: #fff; }
  .mi { white-space: nowrap; }
  .strong { font-weight: 700; margin-left: -3px; }
  .tray { margin-left: auto; display: flex; align-items: center; gap: 34px; }
  .ime { width: 40px; height: 29px; border-radius: 5px; background: #ececea; color: #35331f; font-weight: 600; line-height: 29px; text-align: center; }
  .clock { white-space: nowrap; color: #eeeeec; }

  .window { position: relative; flex: 1; min-height: 0; display: flex; flex-direction: column; background: #4a4a4a; border-top: 1px solid #303030; border-bottom: 2px solid #000; border-radius: 6px 12px 0 0; overflow: hidden; }
  .appbar { flex: none; height: 77px; display: grid; grid-template-columns: 1fr auto 1fr; align-items: center; border-bottom: 2px solid #323232; }
  .appbar h1 { font-size: 28px; margin-right: 62px; color: #cfcfcf; }
  .left, .right { display: flex; align-items: center; }
  .left { padding-left: 9px; }
  .lights { display: flex; gap: 13px; padding-bottom: 12px; margin-right: 62px; }
  .lights i { width: 22px; height: 22px; border-radius: 50%; }
  .lights .r { background: radial-gradient(circle, #5a0b06 3px, #ed6a5e 4px); }
  .lights .y { background: #f4bd4f; }
  .lights .g { background: #56c14a; }
  .vline { width: 3px; height: 44px; background: #555; }
  .left .vline { margin-left: 26px; }
  .right { justify-content: flex-end; padding-right: 21px; }
  .tall { height: 58px; margin-right: 15px; }
  .share { width: 116px; height: 54px; border-radius: 27px; background: #3567de; color: #fff; font-size: 27px; font-weight: 500; margin-right: 30px; }
  .right .bare { margin-right: 30px; }
  .right .bare:nth-of-type(3) { margin-right: 24px; }
  .right .wide { margin: 0 38px; }
  .right .bare:last-child { margin-right: 0; }

  .work { flex: 1; min-height: 0; display: grid; grid-template-columns: 81px minmax(0, 1fr) 560px; }
  .strip { height: 27px; background: #3a3a3a; border-bottom: 2px solid #323232; display: flex; align-items: center; padding-left: 9px; }
  .toolbar { overflow: hidden; box-shadow: 4px 0 0 #333; position: relative; }
  .grip { height: 9px; width: 44px; margin: 3px 0 29px 17px; background: repeating-linear-gradient(90deg, #353535 0 3px, transparent 3px 5px); }
  .toolbar section { padding: 0 13px 3px 6px; border-top: 1px solid #505050; }
  .toolbar section:first-of-type { border-color: transparent; }
  .toolbar h2 { font-size: 19px; line-height: 24px; padding: 10px 0 5px; text-align: center; white-space: nowrap; margin: 0 -6px; }
  .tool { display: block; width: 62px; height: 54px; padding: 0; }
  .tool.on { background: linear-gradient(#2b2b2b, #2b2b2b) center / 62px 48px no-repeat; }
  .inks { display: flex; flex-direction: column; align-items: flex-start; }
  .swap { display: flex; justify-content: space-between; width: 71px; }
  .toolbar .swap { margin: 9px 0 14px -2px; }
  .fs { margin: 0 0 14px -2px; }
  .m1 { margin: 21px 0 0 20px; }
  .m2 { margin: 28px 0 0 11px; }
  .m3 { margin: 54px 0 0 15px; }

  main { display: flex; flex-direction: column; min-width: 0; margin: 0 6px 0 4px; }
  .tabs { flex: none; height: 66px; background: #3a3a3a; border-bottom: 3px solid #333; display: flex; }
  .doctab { display: flex; align-items: center; gap: 22px; width: 506px; padding-left: 17px; background: #4a4a4a; border-right: 2px solid #333; color: #f2f2f2; font-weight: 700; white-space: nowrap; }
  .stage { flex: 1; min-height: 0; display: grid; grid-template-columns: minmax(0, 1fr) 35px; grid-template-rows: minmax(0, 1fr) 54px; }
  .canvas { position: relative; overflow: hidden; background: #5f5f5f; }
  .hint { display: flex; align-items: center; gap: 22px; padding-left: 12px; border-top: 4px solid #535353; white-space: nowrap; }
  .vscroll { grid-row: 1 / 3; grid-column: 2; background: #424242; display: flex; flex-direction: column; align-items: center; justify-content: space-between; padding: 14px 0; color: #9a9a9a; }
  .up { transform: rotate(180deg); }
  .vthumb { width: 33px; height: 56px; border-radius: 16px; background: #555; margin-top: 34px; }

  .canvas > :global(*) { position: absolute; }
  .red { background: #e9301c; }
  .blue { background: #2600f5; }
  .chip { width: 123px; height: 111px; }
  .page { left: 0; top: 0; width: 87px; height: 449px; background: #f0f1f5; border: solid #000; border-width: 0 2px 2px 0; }
  .note { font: 95px/96px Inter, sans-serif; color: #000; white-space: nowrap; }
  .key1 { left: 161px; top: 197px; }
  .key2 { left: 161px; top: 335px; }
  .n1 { left: 306px; top: 216px; }
  .n2 { left: 306px; top: 331px; }
  .n3 { left: 134px; top: 1366px; }
  .n4 { left: 1968px; top: 1705px; }
  .board { background: #fff; color: #000; display: flex; flex-direction: column; }
  .desktop { left: 124px; top: 486px; width: 1496px; height: 844px; padding-bottom: 36px; }
  .desktop::after { content: ''; position: absolute; inset: 0; border: 2px solid #000; }
  .frame { border: 8px solid #ffff45; margin: -4px -4px 0; display: flex; }
  .navrow { height: 149px; justify-content: flex-end; gap: 44px; padding: 10px 19px 0; font: 45px/60px 'Noto Sans CJK KR', sans-serif; }
  .herorow { display: flex; justify-content: space-between; align-items: center; }
  .herorow b { font: 95px/110px 'Noto Sans CJK KR', sans-serif; padding-top: 4px; }
  .herorow em { font: 77px/92px Inter, sans-serif; padding-bottom: 6px; }
  .desktop .herorow { height: 148px; margin-top: -8px; padding: 8px 30px 0 27px; }
  .desktop .fillbox { flex: 1; margin: 0 34px 0 32px; }
  .mobile { left: 1994px; top: 162px; width: 841px; height: 1494px; padding: 24px 41px 49px 36px; }
  .mobile .herorow { height: 130px; padding-bottom: 14px; }
  .mobile .chip { margin: 23px 0 39px; flex: none; }
  .mobile .fillbox { flex: 1; }

  .taskbar { right: 257px; top: 9px; width: 781px; height: 80px; display: flex; align-items: center; gap: 10px; padding: 0 27px 0 11px; background: #4a4a4a; border: 2px solid #2e2e2e; border-radius: 8px; }
  .handle { width: 8px; height: 60px; border-radius: 4px; background: #9b9b9b; margin-right: 13px; }
  .box { height: 62px; display: flex; align-items: center; gap: 18px; padding: 0 17px 0 23px; border: 2px solid #676767; border-radius: 5px; font-size: 27px; font-weight: 500; color: #fafafa; white-space: nowrap; }
  .gen { gap: 10px; padding: 0 19px 0 18px; }
  .taskbar > .bare { margin-left: 10px; }
  .taskbar > .bare:last-child { margin-left: auto; }

  .combo { display: flex; border: 2px solid #555; border-radius: 5px; overflow: hidden; color: #fafafa; font-weight: 500; }
  .combo input { flex: 1; width: 0; border: 0; background: #3b3b3b; padding: 0 8px; }
  .combo button { width: 40px; border-left: 2px solid #555; background: #444; display: flex; align-items: center; justify-content: center; flex: none; }
  .status { flex: none; height: 36px; display: flex; padding-left: 7px; overflow: hidden; }
  .status .combo { height: 50px; flex: none; }
  .zoomf { width: 155px; margin-right: 8px; }
  .rotf { width: 154px; }
  .artf { width: 132px; }
  .pair { display: flex; height: 40px; width: 91px; justify-content: center; gap: 20px; }
  .status > .pair ~ .pair { width: 94px; border-right: 2px solid #505050; gap: 22px; }
  .mode { width: 444px; height: 48px; line-height: 48px; text-align: center; border-right: 2px solid #505050; }
  .play { width: 38px; height: 40px; }
  .hscroll { flex: 1; height: 40px; display: flex; align-items: center; justify-content: space-between; padding: 0 8px; background: #424242; color: #9a9a9a; }
  .lt { transform: rotate(90deg); }
  .rt { transform: rotate(-90deg); }
  .hthumb { width: 56px; height: 33px; border-radius: 16px; background: #555; margin-left: 286px; }
  .cornerbox { width: 35px; background: #464646; }

  .props { border-left: 2px solid #333; border-right: 3px solid #333; min-width: 0; box-shadow: -5px 0 0 #363636; position: relative; }
  .end { justify-content: flex-end; padding-right: 15px; }
  .ptabs { display: flex; height: 60px; background: #3a3a3a; }
  .ptabs button { width: 161px; border-right: 2px solid #323232; border-bottom: 2px solid #323232; font-weight: 600; color: #a0a0a0; padding-bottom: 2px; }
  .ptabs button:last-child { width: 140px; }
  .ptabs .on, .cptabs .on { background: #4a4a4a; color: #f5f5f5; border-bottom-color: #4a4a4a; }
  .ptabs::after { content: ''; flex: 1; border-bottom: 2px solid #323232; }
  .ptabs .on { width: 157px; }
  .props section { margin-right: 28px; padding-left: 21px; border-bottom: 3px solid #505050; }
  .none { height: 74px; padding-top: 23px; }
  .docsec { height: 286px; padding-top: 26px; }
  .frow { display: flex; align-items: center; height: 46px; margin-top: 18px; }
  .docsec h3 + .frow { margin-top: 24px; }
  .frow label, .frow > span { width: 154px; margin-right: 13px; text-align: right; }
  .selwrap { display: grid; width: 256px; align-items: center; color: #fafafa; font-weight: 500; }
  .selwrap > :global(*) { grid-area: 1 / 1; }
  .selwrap select { appearance: none; height: 45px; border: 2px solid #555; border-radius: 5px; background: #444; padding: 0 15px; }
  .selwrap :global(svg) { justify-self: end; margin-right: 11px; pointer-events: none; }
  .abf { width: 166px; height: 45px; }
  .nav1 { margin-left: 29px; }
  .nav2 { margin-left: 32px; }
  .btn { height: 46px; border: 2px solid #6a6a6a; border-radius: 4px; color: #fafafa; font-weight: 500; white-space: nowrap; }
  .edit { width: 256px; }
  .irow { display: flex; align-items: center; height: 85px; }
  .irow h3 { width: 191px; }
  .ib { width: 49px; height: 48px; margin-right: 18px; border-radius: 4px; display: flex; align-items: center; justify-content: center; }
  .ib.on { background: #2b2b2b; }
  .snap { height: 147px; display: flex; flex-direction: column; align-items: flex-end; }
  .snap .irow { align-self: stretch; height: 83px; margin-bottom: 5px; }
  .smart { width: 400px; height: 43px; }
  .prefs { height: 314px; padding-top: 23px; }
  .kb { display: flex; align-items: center; gap: 13px; margin: 20px 0 13px; height: 46px; white-space: nowrap; }
  .kb input { width: 133px; height: 46px; border: 2px solid #525252; border-radius: 5px; background: #3b3b3b; padding: 0 10px; color: #fafafa; font-weight: 500; }
  .check { display: flex; align-items: center; gap: 8px; height: 53px; padding-left: 7px; }
  .check input { appearance: none; width: 26px; height: 26px; border: 2px solid #bdbdbd; border-radius: 4px; }
  .props .quick { border: 0; padding-top: 37px; }
  .qgrid { display: grid; grid-template-columns: 259px 225px; gap: 23px 22px; margin-top: 23px; }
  .span { grid-column: 1 / 3; }

  .colorpanel { position: absolute; right: 552px; top: 288px; width: 556px; height: 609px; display: flex; flex-direction: column; background: #4a4a4a; border: 2px solid #323232; border-radius: 9px 9px 0 0; box-shadow: 0 4px 18px rgba(0, 0, 0, 0.4); overflow: hidden; }
  .cphead { height: 29px; display: flex; align-items: center; justify-content: space-between; padding: 0 16px 0 10px; background: #3a3a3a; border-bottom: 2px solid #323232; }
  .cptabs { height: 60px; display: flex; background: #3a3a3a; }
  .cptabs [role='tab'] { display: flex; align-items: center; justify-content: center; gap: 12px; width: 175px; border-right: 2px solid #323232; border-bottom: 2px solid #323232; padding-bottom: 3px; font-weight: 600; color: #a0a0a0; white-space: nowrap; }
  .cptabs .on[role='tab'] { width: 114px; color: #f5f5f5; border-bottom-color: #4a4a4a; }
  .burger { flex: 1; justify-content: flex-end; padding-right: 12px; border-bottom: 2px solid #323232; }
  .cpbody { flex: 1; padding: 16px 11px 0; }
  .swatches { display: flex; gap: 3px; height: 36px; margin-top: 13px; border: 2px solid #545454; padding: 1px; }
  .swatches button { width: 30px; height: 30px; }
  .mixer { display: flex; margin-top: 11px; padding-top: 2px; border-top: 3px solid #505050; }
  .inkcol .swap { margin-bottom: 13px; }
  .sliders { flex: 1; display: grid; grid-template-columns: 30px 266px 89px; grid-auto-rows: 45px; row-gap: 28px; padding: 3px 0 0 41px; align-items: center; }
  .range { appearance: none; width: 266px; height: 26px; margin-top: 18px; background: linear-gradient(90deg, #000, #f00) 10px 0 / 246px 8px no-repeat; }
  .range.G { background-image: linear-gradient(90deg, #000, #0f0); }
  .range.B { background-image: linear-gradient(90deg, #000, #00f); }
  .range::-webkit-slider-thumb { appearance: none; width: 20px; height: 18px; margin-top: 8px; background: #bcbcbc; clip-path: polygon(50% 0, 100% 50%, 100% 100%, 0 100%, 0 50%); }
  .num, .hex { border: 2px solid #555; border-radius: 5px; background: #3b3b3b; color: #fafafa; font-weight: 500; }
  .num { width: 80px; height: 45px; padding: 0 10px; justify-self: end; }
  .hexrow { display: flex; align-items: center; margin-top: 46px; height: 49px; }
  .hex { margin-left: auto; width: 144px; height: 49px; display: flex; align-items: center; gap: 8px; padding-left: 8px; }
  .hexrow svg:last-child { margin: 0 10px 0 21px; }
  .hex span { font-size: 34px; font-weight: 400; color: #bcbcbc; }
  .hex input { border: 0; padding: 0; width: 100px; background: none; }
  .spectrum { margin: 19px 24px 0 2px; height: 68px; border: 3px solid #2e2e2e; background: linear-gradient(#fff, rgba(255, 255, 255, 0) 50%, rgba(0, 0, 0, 0) 50%, #000), linear-gradient(90deg, #e9301c, #ffff45 17%, #5dfb3c 34%, #62fbfb 50%, #2600f5 67%, #ea33f7 84%, #e9301c); }
  .cpfoot { height: 16px; border-top: 3px solid #323232; display: flex; justify-content: center; }
  .cpfoot i { width: 43px; height: 9px; background: repeating-linear-gradient(90deg, #333 0 3px, transparent 3px 5px); }
</style>
